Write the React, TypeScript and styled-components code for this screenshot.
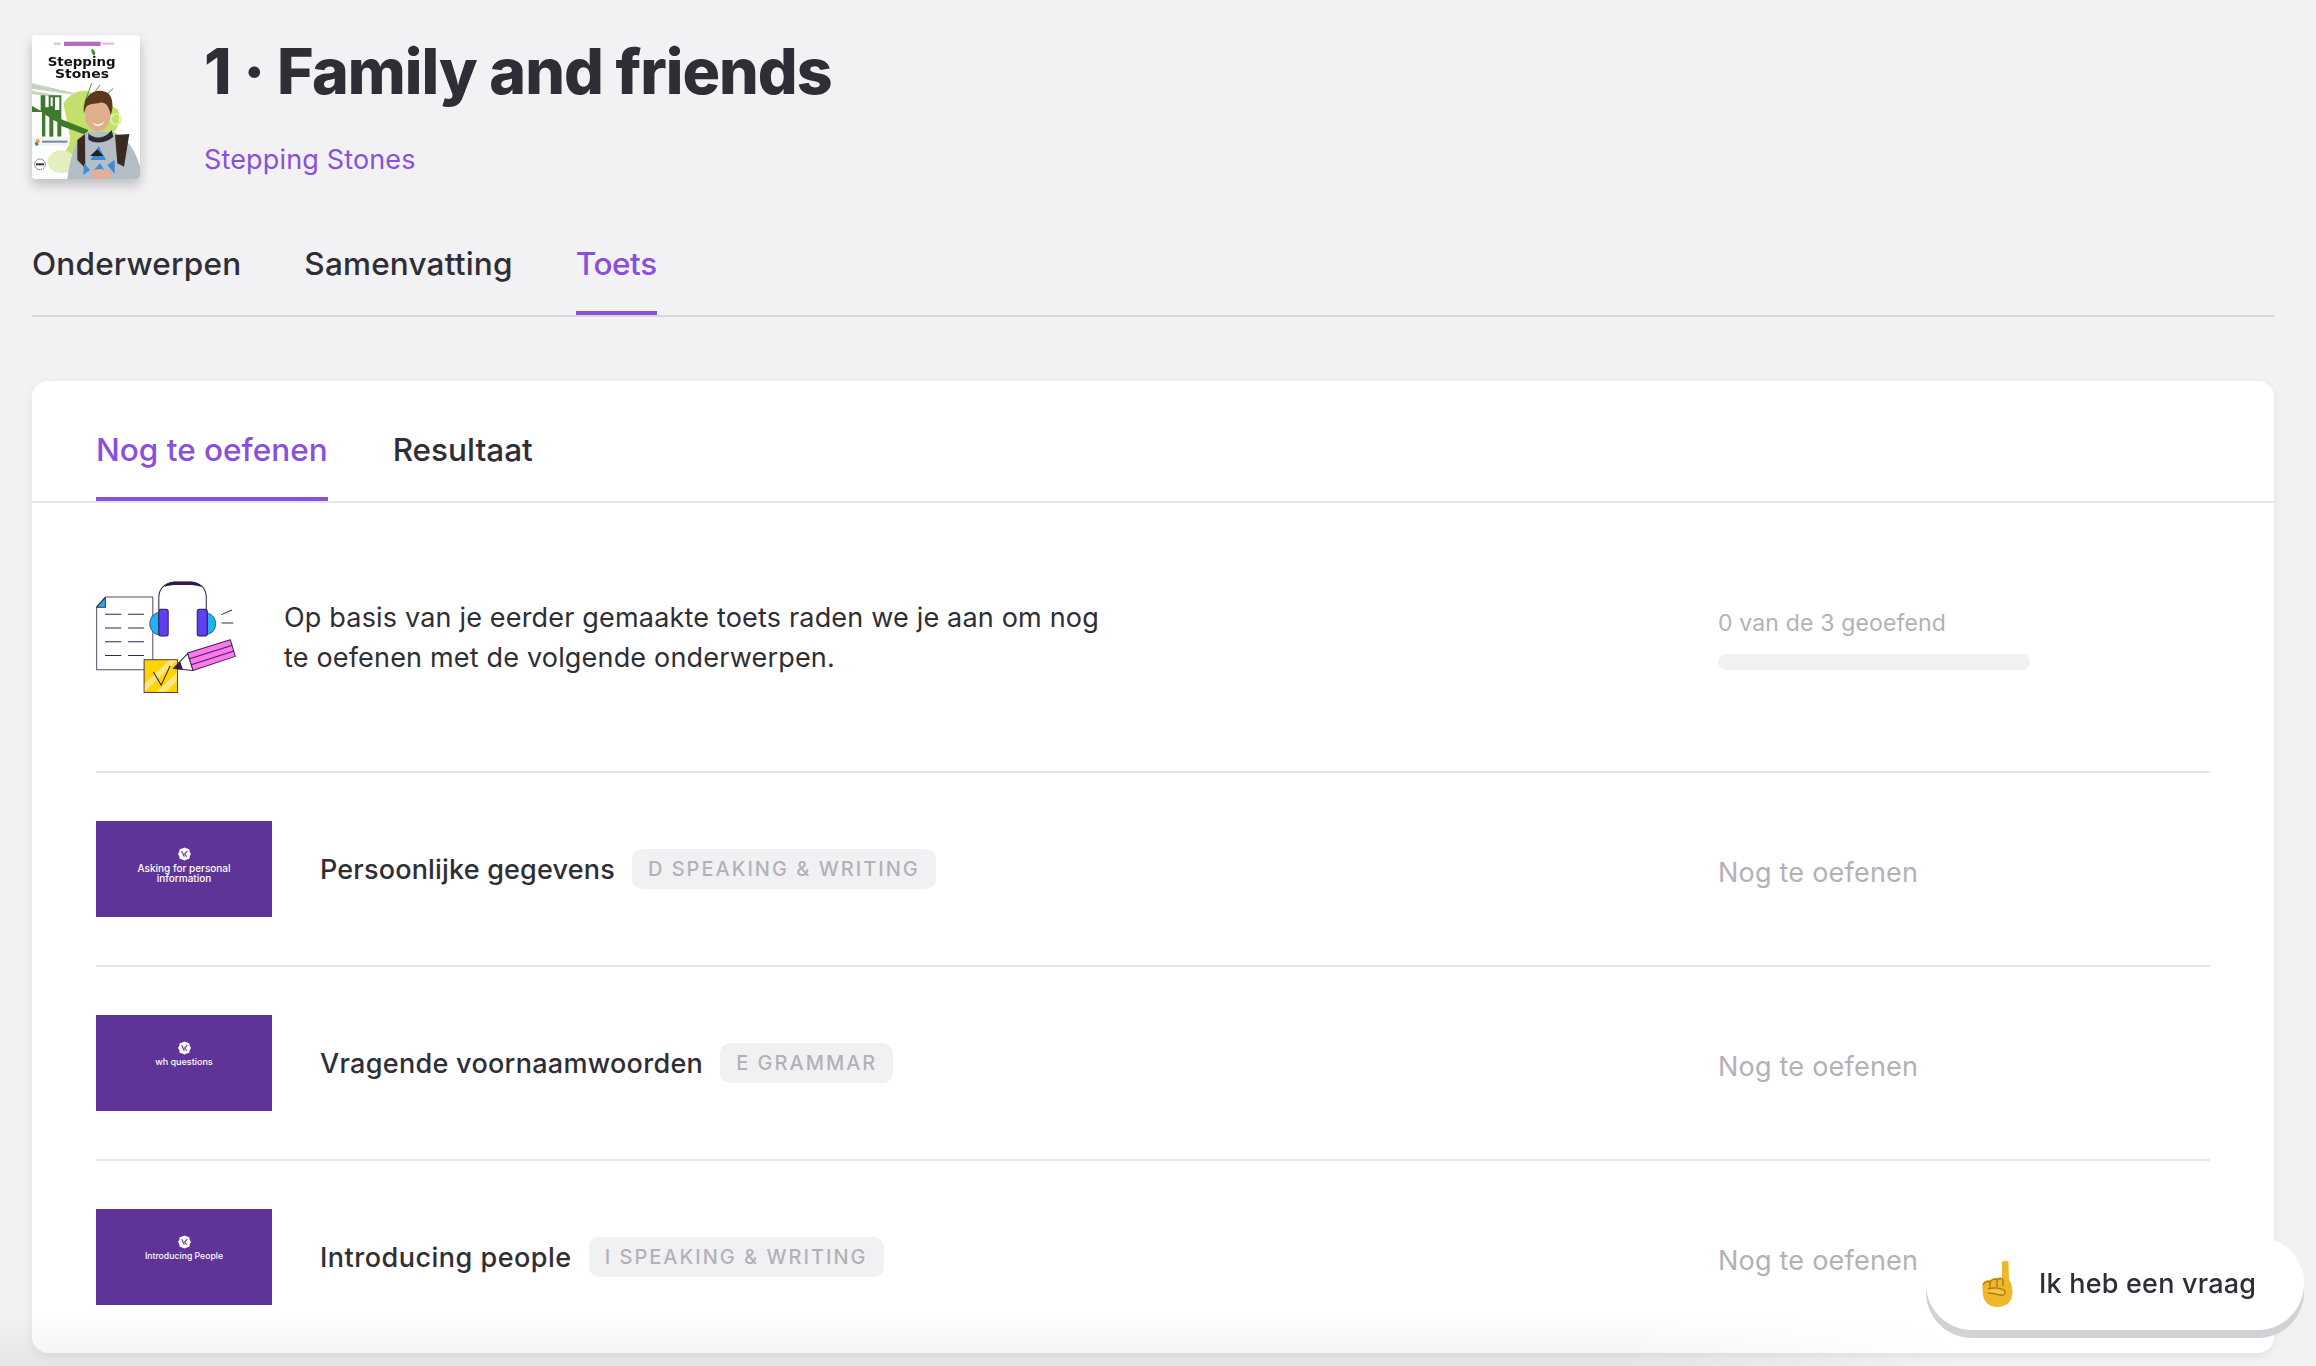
import React from "react";
import styled, { createGlobalStyle } from "styled-components";

const GlobalStyle = createGlobalStyle`
  html, body {
    margin: 0;
    padding: 0;
    height: 100%;
    background: #f2f2f4;
    overflow: hidden;
  }
  body {
    font-family: Inter, "Liberation Sans", sans-serif;
    color: #2f2d35;
    -webkit-font-smoothing: antialiased;
  }
`;

const Page = styled.div`
  box-sizing: border-box;
  width: 2316px;
  height: 1366px;
  padding: 35px 42px 0 32px;
  overflow: hidden;
`;

const Header = styled.header`
  display: flex;
  gap: 64px;
`;

const Cover = styled.div`
  width: 108px;
  height: 144px;
  border-radius: 4px;
  overflow: hidden;
  background: #fff;
  box-shadow: 0 6px 12px rgba(0, 0, 0, 0.22);
  flex: none;
`;

const CoverArt = styled.svg`
  display: block;
  filter: blur(0.35px);
`;

const Heading = styled.div`
  display: flex;
  flex-direction: column;
`;

const Title = styled.h1`
  margin: 0;
  font-size: 62.6px;
  line-height: 72px;
  font-weight: 800;
  letter-spacing: -1px;
  color: #2f2d35;
`;

const Method = styled.a`
  margin-top: 35px;
  font-size: 27px;
  line-height: 36px;
  letter-spacing: 0.15px;
  color: #8a4fdb;
`;

const MainTabs = styled.nav`
  display: flex;
  gap: 63px;
  height: 88px;
  margin-top: 48px;
  border-bottom: 2px solid #d8d8db;
`;

const TabItem = styled.div<{ $active?: boolean }>`
  font-size: 31.5px;
  line-height: 40px;
  font-weight: 500;
  letter-spacing: ${({ $active }) => ($active ? "-0.4px" : "0.2px")};
  color: ${({ $active }) => ($active ? "#8a4fdb" : "#2f2d35")};
  padding-top: 17px;
  box-sizing: border-box;
  height: 100%;
  border-bottom: 4px solid ${({ $active }) => ($active ? "#8a4fdb" : "transparent")};
`;

const Card = styled.section`
  margin-top: 64px;
  background: #fff;
  border-radius: 16px;
  box-shadow: 0 3px 10px rgba(0, 0, 0, 0.07);
`;

const CardTabs = styled.div`
  display: flex;
  gap: 65px;
  height: 120px;
  padding: 0 64px;
  border-bottom: 2px solid #e6e6e8;
`;

const CardTabItem = styled(TabItem)`
  padding-top: 49px;
  letter-spacing: 0;
`;

const Body = styled.div`
  padding: 0 64px;
`;

const Intro = styled.div`
  display: grid;
  grid-template-columns: 1fr 492px;
  align-items: center;
  height: 268px;
  border-bottom: 2px solid #e6e6e8;
`;

const IntroLeft = styled.div`
  display: flex;
  align-items: center;
  gap: 46px;
`;

const IntroText = styled.p`
  margin: 1px 0 0;
  width: 830px;
  font-size: 27px;
  line-height: 40px;
  letter-spacing: 0.18px;
  color: #2f2d35;
`;

const Progress = styled.div`
  display: flex;
  flex-direction: column;
  gap: 16px;
  padding-top: 4px;
`;

const ProgressLabel = styled.span`
  font-size: 23px;
  line-height: 30px;
  letter-spacing: 0.16px;
  color: #b3b1b8;
`;

const ProgressBar = styled.div`
  width: 312px;
  height: 16px;
  border-radius: 8px;
  background: #f1f1f2;
`;

const Row = styled.div<{ $last?: boolean }>`
  display: grid;
  grid-template-columns: 1fr 492px;
  align-items: center;
  padding: 48px 0;
  border-bottom: ${({ $last }) => ($last ? "none" : "2px solid #e6e6e8")};
`;

const RowLeft = styled.div`
  display: flex;
  align-items: center;
`;

const Thumb = styled.div`
  display: flex;
  flex-direction: column;
  align-items: center;
  flex: none;
  box-sizing: border-box;
  width: 176px;
  height: 96px;
  padding-top: 26px;
  margin-right: 48px;
  background: #5e3499;
  color: #fff;
  text-align: center;
`;

const ThumbText = styled.span<{ $size: number }>`
  display: block;
  margin-top: 2px;
  width: 130px;
  font-size: ${({ $size }) => $size}px;
  line-height: 10px;
  font-weight: 500;
`;

const Name = styled.span<{ $spacing: number }>`
  padding-top: 2px;
  font-size: 27px;
  line-height: 36px;
  font-weight: 500;
  letter-spacing: ${({ $spacing }) => $spacing}px;
  color: #2f2d35;
`;

const Tag = styled.span`
  box-sizing: border-box;
  height: 40px;
  margin-left: 17px;
  padding: 0 16px;
  border-radius: 10px;
  background: #f1f1f3;
  color: #b3b1b8;
  font-size: 20px;
  line-height: 40px;
  font-weight: 500;
  letter-spacing: 2px;
  white-space: nowrap;
`;

const Status = styled.span`
  font-size: 27px;
  line-height: 36px;
  letter-spacing: 0.22px;
  color: #b3b1b8;
  padding-top: 8px;
`;

const BottomFade = styled.div`
  position: fixed;
  left: 0;
  bottom: 0;
  width: 2316px;
  height: 52px;
  background: linear-gradient(to bottom, rgba(0, 0, 0, 0), rgba(0, 0, 0, 0.05));
  -webkit-mask-image: linear-gradient(to right, #000 70%, transparent 85%);
  mask-image: linear-gradient(to right, #000 70%, transparent 85%);
  pointer-events: none;
`;

const HelpButton = styled.button`
  position: fixed;
  left: 1926px;
  top: 1237px;
  display: flex;
  align-items: center;
  gap: 26px;
  box-sizing: border-box;
  width: 378px;
  height: 93px;
  padding: 0 0 0 56px;
  border: none;
  border-radius: 46px;
  background: #fff;
  box-shadow: 0 8px 0 #d3d1d6;
  color: #2f2d35;
  font-family: inherit;
  font-size: 27px;
  font-weight: 500;
  letter-spacing: 0.2px;
`;

const CoverImage = () => (
  <CoverArt width="108" height="144" viewBox="36 45 324 432">
    <rect x="36" y="45" width="324" height="432" fill="#fff" />
    <rect x="102" y="68" width="20" height="6" fill="#dcb6df" />
    <rect x="132" y="65" width="110" height="13" fill="#b56cbd" />
    <rect x="246" y="68" width="36" height="6" fill="#dcb6df" />
    <path d="M222 108 C212 98 214 90 215 86 C224 90 230 98 222 108Z" fill="#4d8f2e" />
    <text x="185" y="139" fontFamily="DejaVu Sans" fontWeight="700" fontSize="37" textAnchor="middle" textLength="204" lengthAdjust="spacingAndGlyphs" fill="#111">
      Stepping
    </text>
    <text x="186" y="175" fontFamily="DejaVu Sans" fontWeight="700" fontSize="37" textAnchor="middle" textLength="162" lengthAdjust="spacingAndGlyphs" fill="#111">
      Stones
    </text>
    <path d="M130 250 C160 205 205 205 225 225 L295 270 C305 310 290 340 260 350 L190 440 C170 470 130 460 118 430 C130 400 150 380 150 350Z" fill="#c3e06c" />
    <ellipse cx="125" cy="425" rx="42" ry="34" fill="#e3efbd" />
    <circle cx="288" cy="298" r="16" fill="none" stroke="#e2f0ae" strokeWidth="5" />
    <path d="M215 190 L195 245 M240 195 L225 215 M280 205 L262 222" stroke="#4f8f35" strokeWidth="3" />
    <path d="M36 190 L160 218 V224 L36 206Z M36 212 L120 228 V234 L36 222Z" fill="#c8d0c2" />
    <path d="M36 258 L62 272 V226 H76 V262 H86 V226 H124 V298 L205 330 L198 345 L124 318 V350 H112 V306 L100 300 V352 H88 V292 L76 284 V350 H66 V276 L36 276Z" fill="#3f7a2c" />
    <path d="M92 232 H98 V258 H92Z M105 232 H118 V270 H105Z" fill="#fff" />
    <path d="M142 477 C152 400 172 345 205 335 L275 335 C320 345 350 400 360 440 L360 477Z" fill="#b4bec6" />
    <path d="M172 360 L195 342 L196 445 L172 420Z" fill="#3b2a22" />
    <path d="M285 345 L328 342 L312 440 L292 430Z" fill="#3b2a22" />
    <path d="M212 420 L236 378 L258 420Z M222 450 L240 430 L256 455Z M192 430 L210 450 L190 465Z M262 435 L284 420 L284 462Z" fill="#3f8bd8" />
    <path d="M210 408 L232 388 L250 408Z" fill="#222" />
    <path d="M205 340 C220 358 255 358 275 330 L280 350 C255 372 220 372 205 358Z" fill="#2e2a30" />
    <ellipse cx="233" cy="285" rx="38" ry="49" fill="#dfae8d" />
    <path d="M192 280 C186 225 225 205 255 215 C280 222 282 262 272 285 C268 262 258 245 240 248 C222 252 205 250 198 262 Z" fill="#5d3620" />
    <path d="M215 305 C228 316 242 316 254 303 C246 322 225 322 215 305Z" fill="#fff" />
    <path d="M212 455 C230 440 265 448 278 462 L262 477 H220Z" fill="#e0b098" />
    <rect x="36" y="350" width="112" height="28" fill="#f3f3f0" />
    <path d="M46 360 L56 356 L60 366 L50 372Z" fill="#f2a72e" />
    <path d="M44 368 L52 366 L56 374 L48 378Z" fill="#2f7fd0" />
    <rect x="66" y="362" width="76" height="6" fill="#7a86a0" />
    <circle cx="60" cy="433" r="16" fill="#fff" stroke="#222" strokeWidth="3" strokeDasharray="3 3" />
    <rect x="48" y="430" width="24" height="6" fill="#333" />
  </CoverArt>
);

const Illustration = () => (
  <svg width="142" height="114" viewBox="108 90 425 340" fill="none">
    <path d="M110 170 L136 140 H278 V358 H110Z" fill="#fff" stroke="#5a4868" strokeWidth="3" />
    <path d="M110 171 L136 142 V171Z" fill="#1fb3f5" stroke="#3a2550" strokeWidth="3" strokeLinejoin="round" />
    <path d="M135 192 H184 M204 192 H252 M135 233 H184 M204 233 H252 M135 274 H184 M204 274 H252 M135 315 H184 M204 315 H252" stroke="#3a2550" strokeWidth="3" />
    <path d="M296 180 V142 C296 112 318 96 345 96 H390 C418 96 438 112 438 142 V180" stroke="#2e1a47" strokeWidth="3" />
    <path d="M312 110 C322 98 332 94 348 94 H388 C404 94 414 98 424 110 C410 105 400 104 388 104 H348 C336 104 326 105 312 110Z" fill="#2e1a47" />
    <path d="M296 186 C278 190 269 205 269 220 C269 236 278 250 296 254Z" fill="#1fb3f5" stroke="#2e1a47" strokeWidth="2" />
    <rect x="296" y="177" width="28" height="80" rx="6" fill="#5f3ff0" stroke="#2e1a47" strokeWidth="3" />
    <path d="M441 188 C458 192 466 206 466 220 C466 236 458 248 441 252Z" fill="#1fb3f5" stroke="#2e1a47" strokeWidth="2" />
    <rect x="411" y="177" width="30" height="80" rx="6" fill="#5f3ff0" stroke="#2e1a47" strokeWidth="3" />
    <path d="M483 193 L515 179 M484 218 H519" stroke="#3a2550" strokeWidth="3" />
    <rect x="252" y="328" width="100" height="98" fill="#ffd400" stroke="#4a3a50" strokeWidth="3" />
    <path d="M254 400 L326 330 H350 L254 424Z M290 424 L350 366 V392 L318 424Z" fill="#ffe680" />
    <path d="M280 365 L303 404 L330 346" stroke="#2e1a47" strokeWidth="3" />
    <path d="M382 308 L510 268 L525 318 L398 360Z" fill="#ff78ee" stroke="#3a2550" strokeWidth="3" strokeLinejoin="round" />
    <path d="M388 325 L516 285 M393 343 L521 302" stroke="#3a2550" strokeWidth="3" />
    <path d="M382 310 L340 354 L398 360Z" fill="#fff" stroke="#3a2550" strokeWidth="3" strokeLinejoin="round" />
    <path d="M340 354 L360 333 L368 357Z" fill="#2e1a47" />
  </svg>
);

const ThumbLogo = () => (
  <svg width="13" height="14" viewBox="0 0 14 14">
    <path d="M7 0 L9.6 1 L12.2 1.8 L12.6 4.6 L14 7 L12.6 9.4 L12.2 12.2 L9.6 13 L7 14 L4.4 13 L1.8 12.2 L1.4 9.4 L0 7 L1.4 4.6 L1.8 1.8 L4.4 1Z" fill="#fff" />
    <path d="M4 4 L6.8 10 M10 4 L7.2 7 L9.5 10" stroke="#5e3499" strokeWidth="1.2" fill="none" />
  </svg>
);

const PointingHand = () => (
  <svg width="31" height="47" viewBox="0 0 31 47">
    <path d="M20 2 C20 0.5 26 0.5 26.5 2 L27 20 C30 24 31 30 30 36 C29 43 23 47 15 47 C7 47 2 42 1 35 C0.5 30 0 25 1 23 C3 20 6 20 8 20 C11 18 16 17 20 18Z" fill="#f0b62c" />
    <path d="M1 25 C3 21 7 21 8 22 L8 28 M8 22 C10 19 14 18 15 20 L15 27 M15 20 C17 18 20 18 21 20 L21 26" stroke="#b27a14" strokeWidth="1.4" fill="none" />
    <path d="M6 29 C12 27 20 28 23 31 C24 34 21 36 18 35 C14 34 10 33 6 33" stroke="#b27a14" strokeWidth="1.4" fill="#f5c542" />
  </svg>
);

type Topic = { name: string; spacing: number; tag: string; label: string[]; labelSize: number };

const topics: Topic[] = [
  { name: "Persoonlijke gegevens", spacing: 0.18, tag: "D SPEAKING & WRITING", label: ["Asking for personal", "information"], labelSize: 10 },
  { name: "Vragende voornaamwoorden", spacing: 0.3, tag: "E GRAMMAR", label: ["wh questions"], labelSize: 9 },
  { name: "Introducing people", spacing: 0.5, tag: "I SPEAKING & WRITING", label: ["Introducing People"], labelSize: 8.7 },
];

export default function App() {
  return (
    <Page>
      <GlobalStyle />
      <Header>
        <Cover>
          <CoverImage />
        </Cover>
        <Heading>
          <Title>1 · Family and friends</Title>
          <Method>Stepping Stones</Method>
        </Heading>
      </Header>

      <MainTabs>
        <TabItem>Onderwerpen</TabItem>
        <TabItem>Samenvatting</TabItem>
        <TabItem $active>Toets</TabItem>
      </MainTabs>

      <Card>
        <CardTabs>
          <CardTabItem $active>Nog te oefenen</CardTabItem>
          <CardTabItem>Resultaat</CardTabItem>
        </CardTabs>
        <Body>
          <Intro>
            <IntroLeft>
              <Illustration />
              <IntroText>
                Op basis van je eerder gemaakte toets raden we je aan om nog te oefenen met de volgende onderwerpen.
              </IntroText>
            </IntroLeft>
            <Progress>
              <ProgressLabel>0 van de 3 geoefend</ProgressLabel>
              <ProgressBar />
            </Progress>
          </Intro>
          {topics.map((topic, index) => (
            <Row key={topic.name} $last={index === topics.length - 1}>
              <RowLeft>
                <Thumb>
                  <ThumbLogo />
                  <ThumbText $size={topic.labelSize}>
                    {topic.label.map((line) => (
                      <div key={line}>{line}</div>
                    ))}
                  </ThumbText>
                </Thumb>
                <Name $spacing={topic.spacing}>{topic.name}</Name>
                <Tag>{topic.tag}</Tag>
              </RowLeft>
              <Status>Nog te oefenen</Status>
            </Row>
          ))}
        </Body>
      </Card>

      <BottomFade />
      <HelpButton>
        <PointingHand />
        Ik heb een vraag
      </HelpButton>
    </Page>
  );
}
